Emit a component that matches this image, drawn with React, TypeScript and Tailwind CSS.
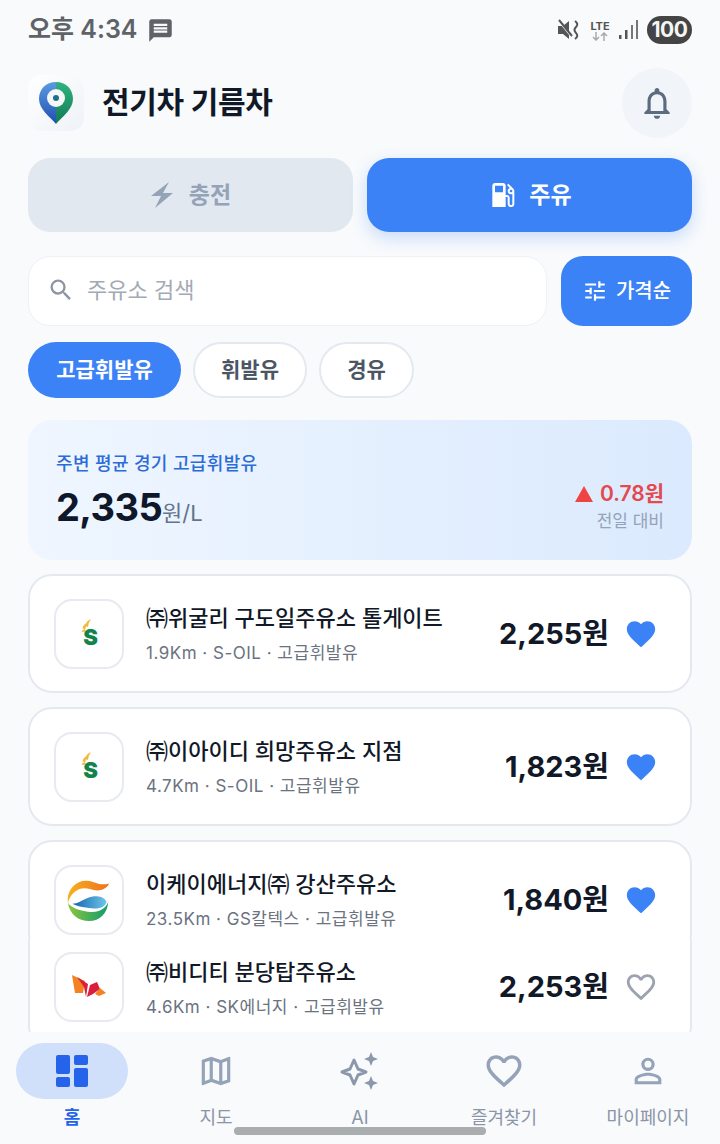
import { MdFavorite, MdFavoriteBorder, MdLocalGasStation, MdMessage, MdOutlineMap, MdOutlineNotifications, MdPersonOutline, MdSearch, MdTune } from 'react-icons/md'

const stations = [
  { name: '㈜위굴리 구도일주유소 톨게이트', meta: '1.9Km · S-OIL · 고급휘발유', price: '2,255원', logo: 'soil', liked: true },
  { name: '㈜이아이디 희망주유소 지점', meta: '4.7Km · S-OIL · 고급휘발유', price: '1,823원', logo: 'soil', liked: true },
  { name: '이케이에너지㈜ 강산주유소', meta: '23.5Km · GS칼텍스 · 고급휘발유', price: '1,840원', logo: 'gs', liked: true },
]

function SoilLogo() {
  return (
    <svg width="34" height="34" viewBox="0 0 34 34">
      <path d="M13 9 Q14 4 19 2 Q16 6 16 10Z M10.500 11.500 Q11 7.500 15 6 Q13.500 9 13.500 12Z M9.500 15 Q10 12.500 13 12 L14 14.500Z" fill="#f0b93a" />
      <text x="18.500" y="28" textAnchor="middle" fontSize="22" fontWeight="900" fill="#12834a" fontFamily="Inter, sans-serif">S</text>
    </svg>
  )
}

function GsLogo() {
  return (
    <svg width="44" height="46" viewBox="0 0 48 48">
      <defs>
        <linearGradient id="gsTop" x1="0" y1="0" x2="1" y2="0">
          <stop offset="0" stopColor="#f6b21e" />
          <stop offset="1" stopColor="#f0701e" />
        </linearGradient>
        <linearGradient id="gsBottom" x1="0" y1="0" x2="1" y2="0">
          <stop offset="0" stopColor="#8cc63f" />
          <stop offset="1" stopColor="#0f9b6e" />
        </linearGradient>
        <linearGradient id="gsMid" x1="0" y1="0" x2="1" y2="0">
          <stop offset="0" stopColor="#1463b0" />
          <stop offset="1" stopColor="#6cc6e8" />
        </linearGradient>
      </defs>
      <path d="M1 27 C-1 13 10 2 22 3 C31 4 36 9 46 6 C42 14 33 15 25 12 C16 9 5 13 1 27Z" fill="url(#gsTop)" />
      <path d="M1 27 C3 41 14 47 24 47 C36 47 44 39 45 26 C43 33 35 38 25 37 C14 36 5 33 1 27Z" fill="url(#gsBottom)" />
      <path d="M6 28 C12 28 16 24 22 22 C30 19 38 19 43 25 C43 31 36 34 27 33 C18 32 12 31 6 28Z" fill="url(#gsMid)" />
    </svg>
  )
}

function SkLogo() {
  return (
    <svg width="36" height="28" viewBox="0 0 36 28">
      <path d="M1 2 L14 8 L12 20 L4 20Z" fill="#f58220" />
      <path d="M6 4 L17 11 L15 24 L13 14Z" fill="#d81f3f" />
      <path d="M16 24 L19 12 L26 9 L29 16 L22 21Z" fill="#d81f3f" />
      <path d="M24 21 L29 15 L35 20 L28 23Z" fill="#f58220" />
    </svg>
  )
}

function LogoBox({ logo }: { logo: string }) {
  return (
    <div className="flex h-[70px] w-[70px] shrink-0 items-center justify-center rounded-[18px] border-2 border-[#e7ebf0] bg-white">
      {logo === 'soil' && <SoilLogo />}
      {logo === 'gs' && <GsLogo />}
      {logo === 'sk' && <SkLogo />}
    </div>
  )
}

function StationRow({ name, meta, price, logo, liked }: { name: string; meta: string; price: string; logo: string; liked: boolean }) {
  return (
    <div className="flex h-[70px] w-full items-center">
      <LogoBox logo={logo} />
      <div className="ml-[22px] min-w-0 flex-1">
        <div className="text-[22px] font-medium leading-[30px] text-[#111827] whitespace-nowrap">{name}</div>
        <div className="mt-[9px] text-[17px] leading-[22px] tracking-[0.5px] text-[#6b7280] whitespace-nowrap">{meta}</div>
      </div>
      <div className="text-[29px] font-bold leading-[36px] text-[#111827] whitespace-nowrap">{price}</div>
      {liked ? <MdFavorite className="ml-[15px] text-[#3b82f6]" size={34} /> : <MdFavoriteBorder className="ml-[15px] text-[#9ca3af]" size={34} />}
    </div>
  )
}

function StatusBar() {
  return (
    <div className="flex h-[60px] items-center justify-between pl-[28px] pr-[28px] text-[#5f6368]">
      <div className="flex items-center gap-[10px]">
        <span className="text-[25px] font-semibold">오후 4:34</span>
        <MdMessage size={27} />
      </div>
      <div className="flex items-center gap-[8px]">
        <svg width="24" height="24" viewBox="0 0 24 24" fill="none">
          <path d="M1 8 H6 L12 3 V21 L6 16 H1Z" fill="#555" />
          <path d="M2 3 L15 19" stroke="#f8fafc" strokeWidth="2" />
          <path d="M2 2 L15 18" stroke="#555" strokeWidth="2" />
          <path d="M18 3 Q22 6 19 9 Q16 12 19 15 Q22 18 18 21" stroke="#555" strokeWidth="2" />
        </svg>
        <div className="flex w-[22px] flex-col items-center">
          <span className="text-[11px] font-bold leading-[12px] text-[#555]">LTE</span>
          <svg width="16" height="9" viewBox="0 0 16 9" fill="none" stroke="#aaa" strokeWidth="1.500">
            <path d="M4 0 V8 M1 5 L4 8 L7 5 M12 9 V1 M9 4 L12 1 L15 4" />
          </svg>
        </div>
        <svg width="20" height="20" viewBox="0 0 20 20" fill="#555">
          <rect x="0" y="15" width="2.500" height="4" />
          <rect x="6" y="10" width="2.500" height="9" />
          <rect x="12" y="5" width="2" height="14" fill="#777" />
          <rect x="17" y="0" width="2" height="19" fill="#777" />
        </svg>
        <div className="flex h-[28px] w-[45px] items-center justify-center rounded-full bg-[#444] text-[21px] font-bold tracking-[-0.5px] text-[#f5f5f5]">100</div>
      </div>
    </div>
  )
}

function Header() {
  return (
    <div className="mt-[8px] flex items-center justify-between">
      <div className="flex items-center gap-[18px]">
        <div className="flex h-[56px] w-[56px] items-center justify-center rounded-[14px] bg-gradient-to-br from-white to-[#eef2f7]">
          <svg width="36" height="44" viewBox="0 0 36 44">
            <defs>
              <linearGradient id="pinL" x1="0" y1="0" x2="0" y2="1">
                <stop offset="0" stopColor="#5b9be0" />
                <stop offset="1" stopColor="#1f4fb0" />
              </linearGradient>
              <linearGradient id="pinR" x1="0" y1="0" x2="0" y2="1">
                <stop offset="0" stopColor="#2fb37f" />
                <stop offset="1" stopColor="#127a55" />
              </linearGradient>
            </defs>
            <path d="M18 1 C8 1 1 8 1 18 C1 28 12 36 18 43Z" fill="url(#pinL)" />
            <path d="M18 1 C28 1 35 8 35 18 C35 28 24 36 18 43Z" fill="url(#pinR)" />
            <circle cx="18" cy="17" r="9" fill="#f4f7f8" />
            <circle cx="18" cy="17" r="3" fill="#1f6f8f" />
          </svg>
        </div>
        <div className="mb-[2px] text-[30px] font-bold tracking-[-0.3px] text-[#111827]">전기차 기름차</div>
      </div>
      <div className="flex h-[70px] w-[70px] items-center justify-center rounded-full bg-[#f1f4f8]">
        <MdOutlineNotifications className="text-[#5d6b80]" size={38} />
      </div>
    </div>
  )
}

function NavItem({ label, active, children }: { label: string; active?: boolean; children: React.ReactNode }) {
  return (
    <div className="flex w-[144px] flex-col items-center">
      <div className={`flex h-[56px] w-[112px] items-center justify-center rounded-full ${active ? 'bg-[#d0dffa]' : ''}`}>{children}</div>
      <div className={`mt-[6px] text-[18px] leading-[26px] ${active ? 'font-semibold text-[#2563eb]' : 'text-[#8b95a5]'}`}>{label}</div>
    </div>
  )
}

export default function App() {
  return (
    <div className="relative flex h-[1144px] w-[720px] flex-col overflow-hidden bg-[#f8fafc] font-['Inter','Noto_Sans_CJK_KR',sans-serif]">
      <StatusBar />

      <div className="flex min-h-0 flex-1 flex-col px-[28px]">
        <Header />

        {/* Fuel tabs */}
        <div className="mt-[20px] flex gap-[14px]">
          <div className="flex h-[74px] flex-1 items-center justify-center gap-[15px] rounded-[22px] bg-[#e2e8f0] text-[23px] font-semibold text-[#94a3b8]">
            <svg width="24" height="28" viewBox="0 0 24 28" fill="#94a3b8">
              <path d="M19 1 L1 15 H11 L5 27 L23 12 H13Z" />
            </svg>
            충전
          </div>
          <div className="flex h-[74px] flex-1 items-center justify-center gap-[10px] rounded-[22px] bg-[#3b82f6] text-[23px] font-semibold text-white shadow-[0_6px_16px_rgba(59,130,246,0.25)]">
            <MdLocalGasStation size={32} />
            주유
          </div>
        </div>

        {/* Search */}
        <div className="mt-[24px] flex gap-[14px]">
          <div className="flex h-[70px] flex-1 items-center rounded-[22px] border border-[#eef1f5] bg-white pl-[18px] pb-[2px] text-[22px] text-[#a3aab5]">
            <MdSearch className="text-[#8b95a5]" size={28} />
            <span className="ml-[12px]">주유소 검색</span>
          </div>
          <div className="flex h-[70px] w-[131px] items-center justify-center gap-[8px] rounded-[22px] bg-[#3b82f6] text-[20px] font-medium text-white">
            <MdTune size={26} />
            가격순
          </div>
        </div>

        {/* Fuel chips */}
        <div className="mt-[16px] flex gap-[12px]">
          <div className="flex h-[56px] w-[153px] items-center justify-center rounded-full bg-[#3b82f6] text-[21px] font-semibold text-white">고급휘발유</div>
          <div className="flex h-[56px] w-[114px] items-center justify-center rounded-full border-2 border-[#e5e9ef] bg-white text-[21px] font-semibold text-[#4b5563]">휘발유</div>
          <div className="flex h-[56px] w-[95px] items-center justify-center rounded-full border-2 border-[#e5e9ef] bg-white text-[21px] font-semibold text-[#4b5563]">경유</div>
        </div>

        {/* Average price */}
        <div className="mt-[22px] flex h-[140px] shrink-0 items-end justify-between rounded-[24px] bg-gradient-to-r from-[#eff6ff] to-[#dbeafe] px-[28px] pb-[26px]">
          <div className="mb-[-4px]">
            <div className="text-[18px] font-medium leading-[26px] tracking-[0.35px] text-[#2c6cd6]">주변 평균 경기 고급휘발유</div>
            <div className="mt-[5px] flex items-baseline leading-[50px]">
              <span className="text-[38px] font-bold tracking-[-0.6px] text-[#0f172a]">2,335</span>
              <span className="text-[22px] text-[#64748b]">원/L</span>
            </div>
          </div>
          <div className="flex flex-col items-end">
            <div className="flex items-center gap-[7px] text-[21px] font-semibold leading-[28px] text-[#e5484d]">
              <span className="h-0 w-0 border-x-[9px] border-b-[16px] border-x-transparent border-b-[#ef4444]" />
              0.78원
            </div>
            <div className="text-[17px] leading-[26px] text-[#94a3b8]">전일 대비</div>
          </div>
        </div>

        {/* Station list */}
        <div className="mt-[14px] min-h-0 flex-1 overflow-hidden">
          {stations.map((s) => (
            <div key={s.name} className="mb-[14px] flex h-[119px] items-center rounded-[24px] border-2 border-[#e5e9ef] bg-white pl-[24px] pr-[32px]">
              <StationRow {...s} />
            </div>
          ))}
          <div className="mt-[-33px] flex h-[110px] items-start rounded-b-[24px] border-2 border-t-0 border-[#e5e9ef] bg-white pl-[24px] pr-[32px] pt-[12px]">
            <StationRow name="㈜비디티 분당탑주유소" meta="4.6Km · SK에너지 · 고급휘발유" price="2,253원" logo="sk" liked={false} />
          </div>
        </div>
      </div>

      {/* Bottom nav */}
      <div className="flex h-[112px] shrink-0 bg-[#f8fafc] pt-[11px]">
        <NavItem label="홈" active>
          <svg width="32" height="32" viewBox="0 0 32 32" fill="#2563eb">
            <rect x="0" y="0" width="14" height="19" rx="2" />
            <rect x="18" y="0" width="14" height="10" rx="2" />
            <rect x="0" y="22" width="14" height="10" rx="2" />
            <rect x="18" y="13" width="14" height="19" rx="2" />
          </svg>
        </NavItem>
        <NavItem label="지도">
          <MdOutlineMap className="text-[#94a3b8]" size={38} />
        </NavItem>
        <NavItem label="AI">
          <svg width="40" height="40" viewBox="0 0 40 40" fill="none">
            <path d="M14 9 L18 18 L26 21 L18 24 L14 33 L10 24 L2 21 L10 18Z" stroke="#8b98ab" strokeWidth="3" strokeLinejoin="round" />
            <path d="M31 1 L33 6 L38 8 L33 10 L31 15 L29 10 L24 8 L29 6Z" fill="#8b98ab" />
            <path d="M31 25 L33 30 L38 32 L33 34 L31 39 L29 34 L24 32 L29 30Z" fill="#8b98ab" />
          </svg>
        </NavItem>
        <NavItem label="즐겨찾기">
          <MdFavoriteBorder className="text-[#94a3b8]" size={42} />
        </NavItem>
        <NavItem label="마이페이지">
          <MdPersonOutline className="text-[#94a3b8]" size={40} />
        </NavItem>
      </div>

      {/* Gesture handle */}
      <div className="absolute bottom-[9px] left-[234px] h-[8px] w-[252px] rounded-full bg-[#a9adad]" />
    </div>
  )
}
